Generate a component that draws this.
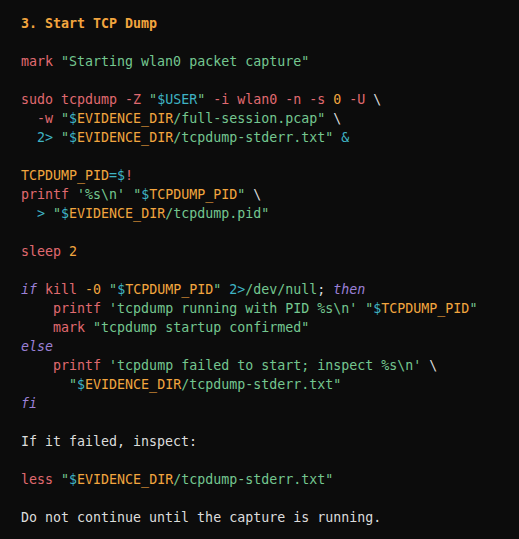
import React from 'react'

const R = ({ children }: { children: React.ReactNode }) => <span className="text-[#e06a70]">{children}</span>
const G = ({ children }: { children: React.ReactNode }) => <span className="text-[#74c790]">{children}</span>
const C = ({ children }: { children: React.ReactNode }) => <span className="text-[#3fb3c4]">{children}</span>
const O = ({ children }: { children: React.ReactNode }) => <span className="text-[#f2a53f]">{children}</span>
const P = ({ children }: { children: React.ReactNode }) => <span className="text-[#9b80d6] italic">{children}</span>

const Ev = () => (
  <>
    <C>$</C>
    <O>EVIDENCE_DIR</O>
  </>
)

export default function App() {
  return (
    <div className="min-h-[539px] w-full bg-[#0c0c0c] pl-[21px] pt-[14px] text-[#dcdcdc]">
      <pre className="font-['DejaVu_Sans_Mono',monospace] text-[13.3px] leading-[19px] whitespace-pre">
        <span className="font-bold text-[#f2a53f]">3. Start TCP Dump</span>
        {'\n\n'}
        <R>mark</R> <G>"Starting wlan0 packet capture"</G>
        {'\n\n'}
        <R>sudo tcpdump -Z</R> <G>"</G><C>$USER</C><G>"</G> <R>-i wlan0 -n -s</R> <O>0</O> <R>-U</R> \
        {'\n  '}
        <R>-w</R> <G>"</G><Ev /><G>/full-session.pcap"</G> \
        {'\n  '}
        <C>2&gt;</C> <G>"</G><Ev /><G>/tcpdump-stderr.txt"</G> <C>&amp;</C>
        {'\n\n'}
        <O>TCPDUMP_PID</O><C>=$</C><R>!</R>
        {'\n'}
        <R>printf</R> <G>'%s\n'</G> <G>"</G><C>$</C><O>TCPDUMP_PID</O><G>"</G> \
        {'\n  '}
        <C>&gt;</C> <G>"</G><Ev /><G>/tcpdump.pid"</G>
        {'\n\n'}
        <R>sleep</R> <O>2</O>
        {'\n\n'}
        <P>if</P> <R>kill</R> <O>-0</O> <G>"</G><C>$</C><O>TCPDUMP_PID</O><G>"</G> <C>2&gt;</C><G>/dev/null</G>; <P>then</P>
        {'\n    '}
        <R>printf</R> <G>'tcpdump running with PID %s\n'</G> <G>"</G><C>$</C><O>TCPDUMP_PID</O><G>"</G>
        {'\n    '}
        <R>mark</R> <G>"tcpdump startup confirmed"</G>
        {'\n'}
        <P>else</P>
        {'\n    '}
        <R>printf</R> <G>'tcpdump failed to start; inspect %s\n'</G> \
        {'\n      '}
        <G>"</G><Ev /><G>/tcpdump-stderr.txt"</G>
        {'\n'}
        <P>fi</P>
        {'\n\n'}
        If it failed, inspect:
        {'\n\n'}
        <R>less</R> <G>"</G><Ev /><G>/tcpdump-stderr.txt"</G>
        {'\n\n'}
        Do not continue until the capture is running.
      </pre>
    </div>
  )
}
